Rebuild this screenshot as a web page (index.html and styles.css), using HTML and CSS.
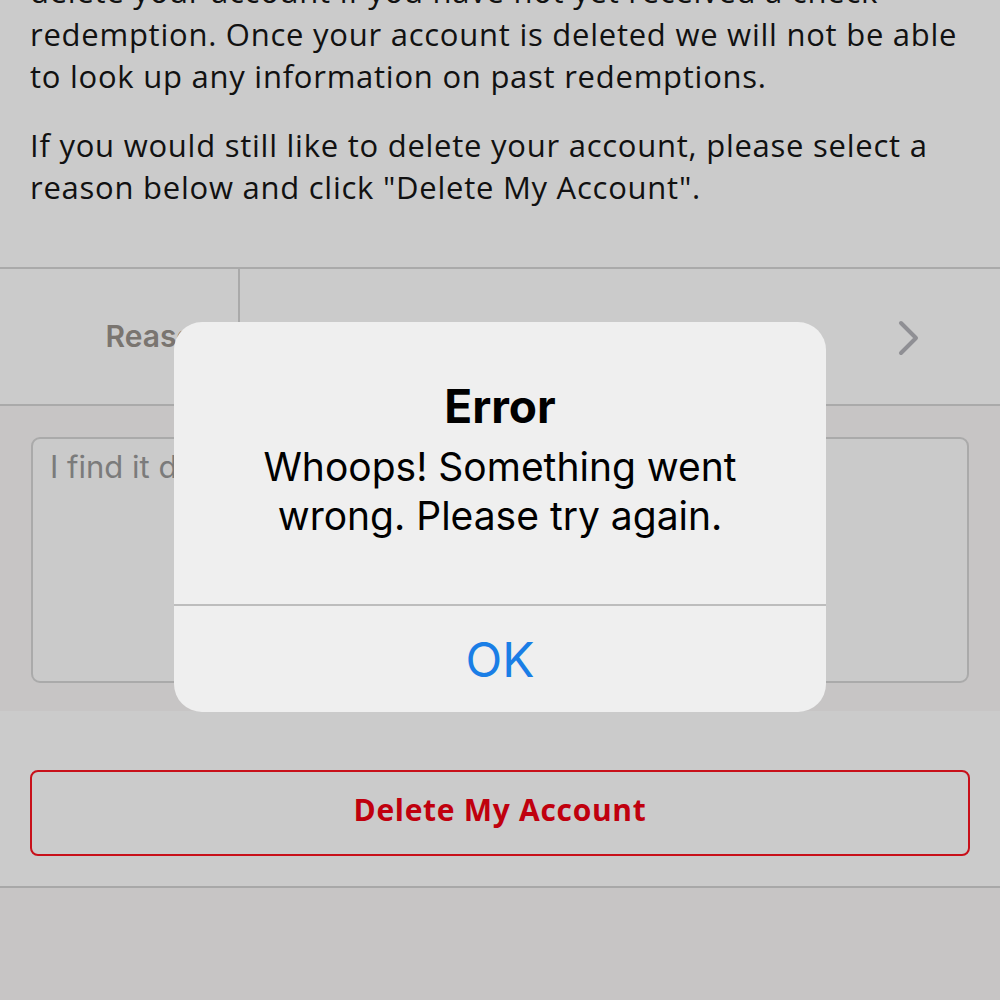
FILE: index.html
```html
<!DOCTYPE html>
<html lang="en">
<head>
<meta charset="utf-8">
<title>Delete Account</title>
<link rel="stylesheet" href="styles.css">
</head>
<body>
<div class="page">
  <section class="intro">
    <p>delete your account if you have not yet received a check redemption. Once your account is deleted we will not be able to look up any information on past redemptions.</p>
    <p>If you would still like to delete your account, please select a reason below and click "Delete My Account".</p>
  </section>
  <section class="reason-row">
    <div class="reason-label">Reason</div>
    <div class="reason-value">
      <svg class="chevron" width="22" height="36" viewBox="0 0 22 36"><path d="M3 3 L18 18 L3 33" fill="none" stroke="#8f8f94" stroke-width="4" stroke-linecap="round" stroke-linejoin="round"/></svg>
    </div>
  </section>
  <section class="comment">
    <div class="textarea">I find it difficult to use the app.</div>
  </section>
  <section class="actions">
    <button class="delete-btn">Delete My Account</button>
  </section>
</div>

<div class="alert">
  <div class="alert-body">
    <div class="alert-title">Error</div>
    <div class="alert-message">Whoops! Something went wrong. Please try again.</div>
  </div>
  <div class="alert-button">OK</div>
</div>
</body>
</html>
```

FILE: styles.css
```css
html, body {
  margin: 0;
  padding: 0;
  background: #c7c5c5;
  height: 100%;
  overflow: hidden;
}

.page {
  font-family: "Open Sans", "Lato", sans-serif;
}

.intro {
  background: #cbcbcb;
  padding: 0 30px 58px 30px;
  margin-top: -30px;
  color: #111;
}

.intro p {
  margin: 0;
  font-size: 31px;
  line-height: 42.5px;
  letter-spacing: 0.75px;
}

.intro p + p {
  margin-top: 26px;
}

.reason-row {
  display: flex;
  height: 135px;
  background: #cbcbcb;
  border-top: 2px solid #aaaaaa;
  border-bottom: 2px solid #aaaaaa;
}

.reason-label {
  width: 240px;
  box-sizing: border-box;
  border-right: 2px solid #aaaaaa;
  display: flex;
  align-items: center;
  justify-content: flex-end;
  padding-right: 25px;
  font-family: "Inter", sans-serif;
  font-weight: 600;
  font-size: 30px;
  color: #7a7570;
}

.reason-value {
  flex: 1;
  display: flex;
  align-items: center;
  justify-content: flex-end;
  padding-right: 80px;
}

.chevron {
  margin-top: 4px;
}

.comment {
  padding: 31px 31px 28px 31px;
  background: #c7c5c5;
}

.textarea {
  height: 246px;
  border: 2px solid #aaaaaa;
  border-radius: 9px;
  background: #cacaca;
  box-sizing: border-box;
  padding: 9px 17px;
  font-family: "Inter", sans-serif;
  font-size: 31px;
  color: #7b7b7b;
}

.actions {
  background: #cbcbcb;
  padding: 59px 30px 30px 30px;
  border-bottom: 2px solid #a8a8a8;
}

.delete-btn {
  display: block;
  width: 100%;
  height: 86px;
  padding: 0 0 6px 0;
  background: transparent;
  border: 2px solid #c8101a;
  border-radius: 8px;
  font-family: "Open Sans", sans-serif;
  font-weight: 700;
  font-size: 30px;
  letter-spacing: 0.7px;
  color: #c0000e;
}

.alert {
  position: absolute;
  left: 174px;
  top: 322px;
  width: 652px;
  height: 390px;
  background: #efefef;
  border-radius: 28px;
  display: flex;
  flex-direction: column;
  font-family: "Inter", sans-serif;
  overflow: hidden;
}

.alert-body {
  height: 284px;
  border-bottom: 2px solid #bdbdbd;
  display: flex;
  flex-direction: column;
  align-items: center;
  padding: 56px 50px 0 50px;
  box-sizing: border-box;
  text-align: center;
}

.alert-title {
  font-weight: 700;
  font-size: 46px;
  line-height: 56px;
  color: #000;
}

.alert-message {
  font-size: 39px;
  line-height: 49px;
  color: #000;
  margin-top: 8px;
}

.alert-button {
  flex: 1;
  display: flex;
  align-items: center;
  justify-content: center;
  font-size: 48px;
  color: #1a7ee6;
}
```
